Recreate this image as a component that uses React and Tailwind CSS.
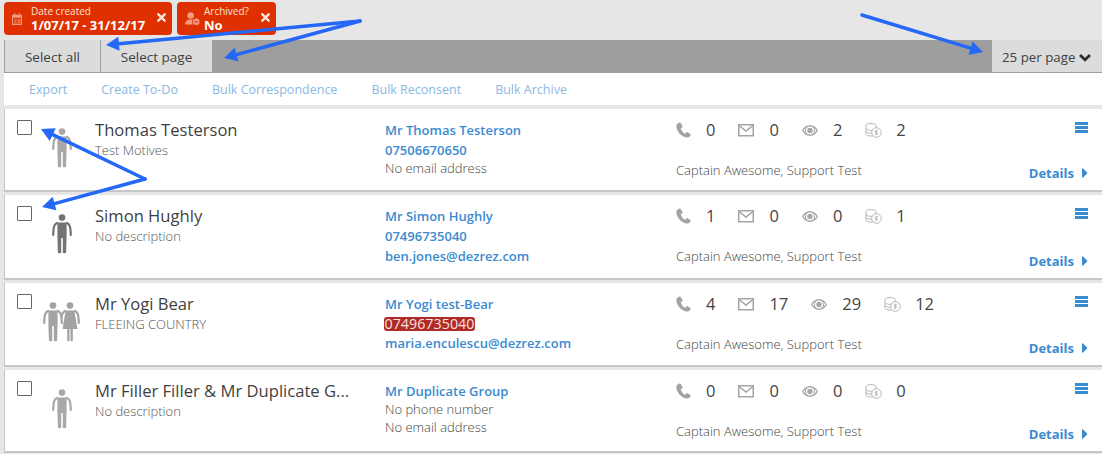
import React from "react";
import { FaTimes, FaCaretRight } from "react-icons/fa";

const rows = [
  {
    name: "Thomas Testerson", desc: "Test Motives", contact: "Mr Thomas Testerson", phone: "07506670650", email: "No email address",
    stats: [0, 0, 2, 2], height: "h-[83px]", kind: "faded",
  },
  {
    name: "Simon Hughly", desc: "No description", contact: "Mr Simon Hughly", phone: "07496735040", email: "ben.jones@dezrez.com", emailLink: true,
    stats: [1, 0, 0, 1], height: "h-[85px]", kind: "dark",
  },
  {
    name: "Mr Yogi Bear", desc: "FLEEING COUNTRY", contact: "Mr Yogi test-Bear", phone: "07496735040", phoneAlert: true, email: "maria.enculescu@dezrez.com", emailLink: true,
    stats: [4, 17, 29, 12], height: "h-[84px]", kind: "couple",
  },
  {
    name: "Mr Filler Filler & Mr Duplicate G...", desc: "No description", contact: "Mr Duplicate Group", phone: "No phone number", email: "No email address",
    stats: [0, 0, 0, 0], height: "h-[83px]", kind: "faded",
  },
];

const arrows = [
  [360, 21, 106, 45],
  [360, 21, 224, 58],
  [862, 15, 983, 52],
  [145, 179, 41, 129],
  [145, 179, 42, 207],
];

const Man = ({ x = 0, color }) => (
  <g transform={`translate(${x} 0)`}>
    <circle cx="10" cy="3.600" r="3.300" fill={color} />
    <path d="M6.400 8.500h7.200a1 1 0 0 1 1 1V22l-.5 16.300c0 1.400-3.300 1.400-3.300 0V24h-1.600v14.300c0 1.400-3.300 1.400-3.300 0L5.400 22V9.500a1 1 0 0 1 1-1z" fill={color} />
    <path d="M5 9C2.400 10.300 1.500 12 1.200 21M15 9c2.600 1.300 3.500 3 3.800 12" fill="none" stroke={color} strokeWidth="2.200" strokeLinecap="round" />
  </g>
);

const Woman = ({ x = 0, color }) => (
  <g transform={`translate(${x} 0)`}>
    <circle cx="10" cy="3.600" r="3.300" fill={color} />
    <path d="M7 8.500h6c.8 0 1.300.4 1.500 1l3 17.500h-4.700v11.300c0 1.400-2.300 1.400-2.300 0V27h-1v11.300c0 1.400-2.300 1.400-2.300 0V27H2.500l3-17.500c.2-.6.700-1 1.500-1z" fill={color} />
    <path d="M15 9c2.600 1.300 3.500 3 3.800 12M5 9C3 10 2.200 11.500 1.500 15" fill="none" stroke={color} strokeWidth="2.200" strokeLinecap="round" />
  </g>
);

const Person = ({ kind }) => {
  if (kind === "couple") {
    return (
      <svg width="37" height="40" viewBox="0 0 37 40" className="shrink-0">
        <Man x={0} color="#a3a3a3" />
        <Woman x={17} color="#a3a3a3" />
      </svg>
    );
  }
  return (
    <svg width="20" height="40" viewBox="0 0 20 40" className="shrink-0">
      <Man color={kind === "dark" ? "#737373" : "#a8a8a8"} />
    </svg>
  );
};

const PhoneIcon = () => (
  <svg width="15" height="16" viewBox="0 0 15 16" fill="#a3a3a3">
    <path d="M3.500.5C2 .8.300 2 .3 4.200.3 9 6 15.500 11.300 15.500c1.700 0 3-1 3.400-2.400.1-.5 0-.8-.4-1.100l-2.600-1.800c-.4-.3-.8-.2-1.100.1l-1 1.100c-.3.300-.6.300-1 .1-1.700-1-3-2.800-3.700-4.600-.1-.4 0-.7.300-.9l1.100-.8c.4-.3.500-.7.300-1.100L4.600 1c-.3-.5-.6-.6-1.100-.5z" />
  </svg>
);

const MailIcon = () => (
  <svg width="16" height="13" viewBox="0 0 16 13" fill="none" stroke="#a3a3a3" strokeWidth="1.500">
    <rect x=".75" y=".75" width="14.500" height="11" />
    <path d="M1 1.500l7 5.500 7-5.500" />
  </svg>
);

const EyeIcon = () => (
  <svg width="16" height="11" viewBox="0 0 16 11" fill="#a8a8a8">
    <path fillRule="evenodd" d="M8 0c3.500 0 6.300 2.300 8 5.500C14.300 8.700 11.500 11 8 11S1.700 8.700 0 5.500C1.700 2.300 4.500 0 8 0zM8 1.500a4 4 0 1 0 0 8 4 4 0 0 0 0-8zM1.500 5.500c.6.900 1.300 1.700 2.100 2.300a5 5 0 0 1 0-4.600C2.800 3.800 2.100 4.600 1.500 5.500zm13 0c-.6-.9-1.300-1.700-2.100-2.300a5 5 0 0 1 0 4.600c.8-.6 1.500-1.400 2.100-2.300z" />
    <circle cx="8" cy="5.500" r="2.700" />
  </svg>
);

const CoinsIcon = () => (
  <svg width="17" height="15" viewBox="0 0 17 15" fill="#fff" stroke="#b0b0b0" strokeWidth=".9">
    <ellipse cx="6" cy="2.500" rx="5" ry="2" />
    <path d="M1 2.500v8.500c0 1.100 2.200 2 5 2s5-.9 5-2V2.500" />
    <path d="M1 5.300c0 1.100 2.200 2 5 2s5-.9 5-2M1 8.200c0 1.100 2.200 2 5 2s5-.9 5-2" fill="none" />
    <circle cx="11.500" cy="9.500" r="4.800" />
    <path d="M13 7.800h-2.500c-.8 0-.8 1.700 0 1.700h1.500c.8 0 .8 1.700 0 1.700H9.800M11.300 6.800v5.400" fill="none" strokeWidth=".8" />
  </svg>
);

const stats = [
  { Icon: PhoneIcon, slot: "w-[30px]" },
  { Icon: MailIcon, slot: "w-[31px]" },
  { Icon: EyeIcon, slot: "w-[31px]" },
  { Icon: CoinsIcon, slot: "w-[31px]" },
];

const CalendarIcon = () => (
  <svg width="10" height="12" viewBox="0 0 14 14" preserveAspectRatio="none" fill="#f29a80">
    <path fillRule="evenodd" d="M1 2h2V0h1.500v2h5V0H11v2h2a1 1 0 0 1 1 1v10a1 1 0 0 1-1 1H1a1 1 0 0 1-1-1V3a1 1 0 0 1 1-1zm.5 3.500v7h11v-7z" />
    <path d="M3 7h3.500v1H3zM3 9h3.500v1H3zM3 11h3.500v1H3zM8 7h1.200v5H8zM10.300 7h1.200v5h-1.200z" />
  </svg>
);

const PersonMinusIcon = () => (
  <svg width="15" height="13" viewBox="0 0 16 14" fill="#f29a80">
    <circle cx="6" cy="3.800" r="3.500" />
    <path d="M0 13.500c0-3.500 2.400-5.500 6-5.500 1 0 1.800.2 2.500.4a4 4 0 0 0 .2 5.100z" />
    <circle cx="12" cy="10.500" r="3.500" />
    <path d="M10 10h4v1.200h-4z" fill="#de3000" />
  </svg>
);

const Chip = ({ icon, label, value, className }) => (
  <div className={`flex items-center h-[33px] rounded-[4px] bg-[#de3000] text-white ${className}`}>
    <div className="w-[27px] shrink-0 flex justify-start pl-[8px]">{icon}</div>
    <div className="flex-1 min-w-0 leading-none">
      <div className="text-[10px] leading-[13px] text-[#ffe3da]">{label}</div>
      <div className="text-[13px] font-bold leading-[15px]">{value}</div>
    </div>
    <FaTimes className="text-[#fbe3dc] text-[13px] mr-[4px] mb-[2px]" />
  </div>
);

const Arrow = ({ from }) => {
  const [x1, y1, x2, y2] = from;
  const len = Math.hypot(x2 - x1, y2 - y1);
  const ux = (x2 - x1) / len;
  const uy = (y2 - y1) / len;
  const bx = x2 - ux * 13;
  const by = y2 - uy * 13;
  const points = `${x2},${y2} ${bx - uy * 7},${by + ux * 7} ${bx + uy * 7},${by - ux * 7}`;
  return (
    <g>
      <line x1={x1} y1={y1} x2={bx} y2={by} stroke="#2468f5" strokeWidth="3.500" strokeLinecap="round" />
      <polygon points={points} fill="#2468f5" />
    </g>
  );
};

const Row = ({ row }) => (
  <div className={`${row.height} flex bg-white border-l border-[#c6c6c6] border-b-2 text-[#444]`}>
    <div className="w-[90px] shrink-0 flex">
      <div className="w-[15px] h-[15px] ml-[12px] mt-[11px] border border-[#666] rounded-[1px] bg-white shrink-0"></div>
      <div className="w-[37px] ml-[11px] mt-[19px] flex justify-center shrink-0">
        <Person kind={row.kind} />
      </div>
    </div>
    <div className="w-[290px] shrink-0 pt-[9px]">
      <div className="text-[16.600px] leading-[24px] text-[#3f3f3f]">{row.name}</div>
      <div className="text-[13px] font-light leading-[16px] text-[#555]">{row.desc}</div>
    </div>
    <div className="w-[291px] shrink-0 pt-[11px] text-[13px]">
      <div className="font-semibold text-[#3a8bd0] leading-[20px]">{row.contact}</div>
      {row.phoneAlert ? (
        <div className="h-[19px] flex items-center">
          <span className="bg-[#b22a25] text-[#f5e4e2] rounded-[3px] text-[14.300px] leading-[14px] ml-[-1px] px-[0.500px]">{row.phone}</span>
        </div>
      ) : row.phone.startsWith("No") ? (
        <div className="leading-[16px] mb-[2px] font-light text-[#444]">{row.phone}</div>
      ) : (
        <div className="leading-[20px] font-semibold text-[#3a8bd0]">{row.phone}</div>
      )}
      <div className={row.emailLink ? "leading-[20px] font-semibold text-[#3a8bd0]" : "leading-[16px] font-light text-[#444]"}>{row.email}</div>
    </div>
    <div className="flex-1 min-w-0 pt-[9px] flex flex-col">
      <div className="flex items-center h-[24px]">
        {row.stats.map((count, i) => {
          const { Icon, slot } = stats[i];
          return (
            <div key={i} className="flex items-center mr-[23px]">
              <div className={`${slot} shrink-0`}><Icon /></div>
              <span className="text-[16.500px] text-[#444]">{count}</span>
            </div>
          );
        })}
      </div>
      <div className="text-[13px] font-light text-[#444] mt-[19px] leading-[18px]">Captain Awesome, Support Test</div>
    </div>
    <div className="w-[88px] shrink-0 flex flex-col items-end pr-[14px] pt-[13px] pb-[7px] justify-between text-[#3a8bd0]">
      <div className="w-[13px] flex flex-col gap-[1px]">
        <div className="h-[3px] bg-[#3a8bd0]"></div>
        <div className="h-[3px] bg-[#3a8bd0]"></div>
        <div className="h-[3px] bg-[#3a8bd0]"></div>
      </div>
      <div className="flex items-center text-[13px] font-bold">
        Details
        <FaCaretRight className="text-[16px] ml-[3px] mr-[-5px]" />
      </div>
    </div>
  </div>
);

export default function App() {
  return (
    <div className="relative w-[1102px] h-[454px] overflow-hidden bg-[#e6e6e6] font-['Open_Sans',sans-serif]">
      <div className="flex gap-[5px] pl-[4px] pt-[2px] h-[40px]">
        <Chip className="w-[168px]" icon={<CalendarIcon />} label="Date created" value="1/07/17 - 31/12/17" />
        <Chip className="w-[99px]" icon={<PersonMinusIcon />} label="Archived?" value="No" />
      </div>

      <div className="ml-[4px] h-[33px] bg-[#9e9e9e] flex justify-between text-[13.500px] text-[#404040]">
        <div className="flex">
          <button className="w-[97px] pt-[3px] bg-[#dcdcdc] border border-[#9e9e9e] border-t-0">Select all</button>
          <button className="w-[111px] pt-[3px] bg-[#dcdcdc] border-b border-[#9e9e9e]">Select page</button>
        </div>
        <button className="w-[111px] pt-[3px] pl-[10px] bg-[#dcdcdc] border-l border-b border-[#9e9e9e] flex items-center gap-[4px] text-[13.300px]">
          25 per page
          <svg width="12" height="9" viewBox="0 0 12 9" fill="none" stroke="#2e2e2e" strokeWidth="2.800">
            <path d="M1 2l5 4.800L11 2" />
          </svg>
        </button>
      </div>

      <div className="ml-[4px] h-[32px] pt-[2px] bg-white flex items-center text-[12.500px] text-[#8ab8e2] pl-[25px]">
        <span className="mr-[34px]">Export</span>
        <span className="mr-[34px]">Create To-Do</span>
        <span className="mr-[34px]">Bulk Correspondence</span>
        <span className="mr-[34px]">Bulk Reconsent</span>
        <span>Bulk Archive</span>
      </div>

      <div className="ml-[4px] mt-[4px] flex flex-col gap-[3px]">
        {rows.map((row) => (
          <Row key={row.contact} row={row} />
        ))}
      </div>

      <svg className="absolute inset-0 pointer-events-none" width="1102" height="454">
        {arrows.map((a) => (
          <Arrow key={a.join("-")} from={a} />
        ))}
      </svg>
    </div>
  );
}
